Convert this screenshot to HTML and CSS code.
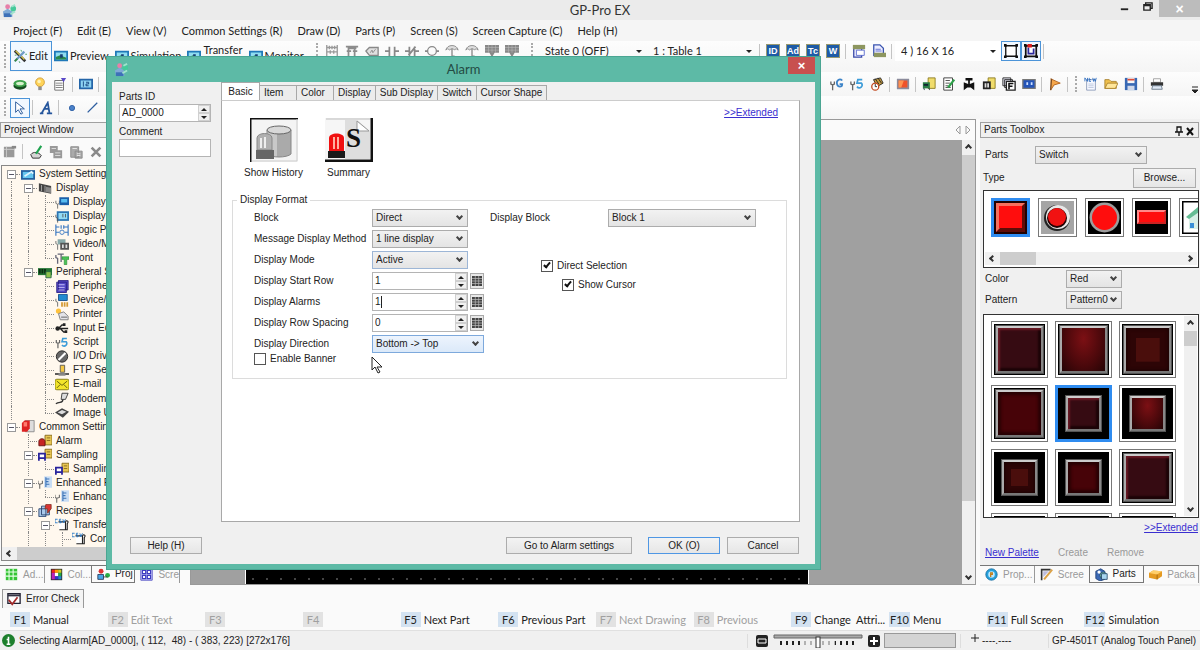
FILE: index.html
```html
<!doctype html>
<html lang="en">
  <head>
    <meta charset="UTF-8" />
    <meta name="viewport" content="width=device-width, initial-scale=1.0" />
    <title>GP-Pro EX</title>
    <link rel="stylesheet" href="styles.css">
  </head>
  <body>
    <!-- icon sprite -->
    <svg class="sprite" aria-hidden="true">
      <symbol id="app" viewBox="0 0 16 16"><circle cx="6" cy="4" r="2.6" fill="#e77fa8"/><path d="M1 9l5-3 5 3v6H2z" fill="#7fa9d6"/><path d="M2 11h8v4H2z" fill="#3d70b8"/><circle cx="12" cy="6" r="3" fill="#45c99a"/><path d="M10 4l4-2M9 12l5-3" stroke="#9fe3cc" stroke-width="2"/></symbol>
      <symbol id="pencil" viewBox="0 0 16 16"><path d="M2 2l12 12" stroke="#333" stroke-width="3"/><path d="M3 2l10 10" stroke="#d8c64a" stroke-width="1.5"/><path d="M2 14L13 3" stroke="#6f9cc8" stroke-width="2.5"/><path d="M2 14l3-3" stroke="#3a8a3a" stroke-width="2"/><path d="M9 1l1 2M14 6h2M2 7h2M7 14l1 2" stroke="#3d9c5a"/></symbol>
      <symbol id="preview" viewBox="0 0 16 16"><path d="M0 2h16v12H0z" fill="#1f78b8"/><path d="M2 4h12v8H2z" fill="#8fdcf0"/><path d="M2 9l5-2 7 3v2H2z" fill="#2c8a4c"/><path d="M7 6h3v4H7z" fill="#183d73"/></symbol>
      <symbol id="ring" viewBox="0 0 16 16"><ellipse cx="8" cy="10" rx="7.5" ry="4.5" fill="#164d20"/><ellipse cx="8" cy="7.500" rx="7.500" ry="4" fill="#3ea34c"/><ellipse cx="8" cy="7.5" rx="4.500" ry="2" fill="#d8f3cd"/></symbol>
      <symbol id="bulb" viewBox="0 0 16 16"><circle cx="8" cy="6" r="5" fill="#ffd45a" stroke="#cf9a32"/><circle cx="7" cy="5" r="2" fill="#fff3b8"/><path d="M6 11h4v4H6z" fill="#8f8f8f"/></symbol>
      <symbol id="sheet" viewBox="0 0 16 16"><path d="M2 4h10v11H2z" fill="#fff" stroke="#666"/><path d="M3 7h8M3 9.500h8M3 12h8" stroke="#777"/><path d="M9 1h6l-3 5z" fill="#5a49c8"/></symbol>
      <symbol id="screen" viewBox="0 0 16 16"><path d="M1 3h14v10H1z" fill="#8dd3f2" stroke="#2465a8" stroke-width="2"/><path d="M5 5v6M8 6h3v2H8v2h3" stroke="#123f7a" fill="none"/></symbol>
      <symbol id="pointer" viewBox="0 0 16 16"><path d="M3 1v12l3-3 3 5 2-1-3-5h5z" fill="#fff" stroke="#1d4f93"/></symbol>
      <symbol id="letter" viewBox="0 0 16 16"><path d="M1 14h4M9 14h6M3 14L10 2l2 12M6 9h5" fill="none" stroke="#24559c" stroke-width="2"/></symbol>
      <symbol id="dot" viewBox="0 0 16 16"><circle cx="8" cy="8" r="3" fill="#4b82c9" stroke="#2b5da3"/></symbol>
      <symbol id="line" viewBox="0 0 16 16"><path d="M3 13L14 2" stroke="#2f5fa0" stroke-width="1.500"/></symbol>
      <symbol id="lad1" viewBox="0 0 16 16"><path d="M2 1v13M14 1v13M2 4h12M2 9h12M5 2v4M8 2v4M11 2v4M6 7v4M10 7v4" stroke="#999" stroke-width="1.500" fill="none"/></symbol>
      <symbol id="lad2" viewBox="0 0 16 16"><path d="M1 3h14M4 3v12M11 3v12M2 8h5M9 8h5M4 5h9" stroke="#8c8c8c" stroke-width="2" fill="none"/></symbol>
      <symbol id="lad3" viewBox="0 0 16 16"><path d="M5 4h10v9H5L1 8z" fill="#e0e0e0" stroke="#888" stroke-width="1.500"/><path d="M6 10l2-3 1 3 3-4" stroke="#888" fill="none"/></symbol>
      <symbol id="cno" viewBox="0 0 16 16"><path d="M0 8h5M5 3v11M11 3v11M11 8h5" stroke="#888" stroke-width="2"/></symbol>
      <symbol id="cnc" viewBox="0 0 16 16"><path d="M0 8h5M5 3v11M11 3v11M11 8h5M4 13l8-10" stroke="#888" stroke-width="2"/></symbol>
      <symbol id="coil" viewBox="0 0 16 16"><circle cx="8" cy="8" r="5" fill="none" stroke="#888" stroke-width="1.500"/><path d="M0 8h3M13 8h3" stroke="#888" stroke-width="2"/></symbol>
      <symbol id="umb" viewBox="0 0 16 16"><path d="M1 7c1-7 13-7 14 0-2-2-3-2-4 0-1-2-4-2-6 0-1-2-3-2-4 0z" fill="#ddd" stroke="#888"/><path d="M8 5v9h3" stroke="#888" stroke-width="1.500" fill="none"/></symbol>
      <symbol id="keys" viewBox="0 0 16 16"><path d="M0 1h16v9H0zM5 10h6l-3 5z" fill="#888"/><path d="M0 4h16M0 7h16M4 1v9M8 1v9M12 1v9" stroke="#bbb" stroke-width=".6"/></symbol>
      <symbol id="copy1" viewBox="0 0 16 16"><path d="M2 3h9v12H2z" fill="#eef" stroke="#3949a8" stroke-width="1.500"/><path d="M1 1h14v5H1z" fill="#8d965f"/><path d="M5 7h9v6H5z" fill="#fff" stroke="#56c"/></symbol>
      <symbol id="copy2" viewBox="0 0 16 16"><path d="M2 1h7l4 4v8H2z" fill="#eef" stroke="#3b55b0" stroke-width="1.500"/><path d="M4 6h6M4 8h7" stroke="#56c"/><path d="M2 10h14v5H2z" fill="#8d965f"/></symbol>
      <symbol id="frame" viewBox="0 0 16 16"><path d="M2 2h12v12H2z" fill="#fff" stroke="#111" stroke-width="1.500"/><path d="M0 0h3v3H0zM13 0h3v3h-3zM0 13h3v3H0zM13 13h3v3h-3z" fill="#111"/></symbol>
      <symbol id="frame2" viewBox="0 0 16 16"><path d="M2 2h12v12H2z" fill="#fff" stroke="#111" stroke-width="2"/><path d="M5 4v7h6V5" fill="none" stroke="#2c2a9c" stroke-width="2"/><path d="M4 0h5v4H4z" fill="#e01b1b"/><path d="M0 0h3v3H0zM13 0h3v3h-3zM0 13h3v3H0zM13 13h3v3h-3z" fill="#111"/></symbol>
      <symbol id="wg" viewBox="0 0 16 16"><path d="M1 5v3l2 1v6M5 5v3L3 9" stroke="#666" stroke-width="1.500" fill="none"/><path d="M14 4c-3-3-7 0-6 4s6 4 6 0h-3" stroke="#3d84c8" stroke-width="2" fill="none"/></symbol>
      <symbol id="ws" viewBox="0 0 16 16"><path d="M1 5v3l2 1v6M5 5v3L3 9" stroke="#666" stroke-width="1.500" fill="none"/><path d="M14 3H9L8 7h5c3 3-2 8-5 4" stroke="#3d9cd8" stroke-width="2" fill="none"/></symbol>
      <symbol id="stop" viewBox="0 0 16 16"><path d="M4 3l8-2 3 6-7 4z" fill="#c69b3d" stroke="#222"/><path d="M6 2l4 6M9 1l4 6" stroke="#222"/><circle cx="6" cy="11" r="4" fill="#fff" stroke="#c2481e" stroke-width="1.500"/><path d="M6 8v3h2" stroke="#222" fill="none"/></symbol>
      <symbol id="orange" viewBox="0 0 16 16"><path d="M1 2h14v12H1z" fill="#8c8c9c"/><path d="M3 4h10v8H3z" fill="#f0522a"/><path d="M3 4h6l-3 8H3z" fill="#ff9350"/></symbol>
      <symbol id="gdoc" viewBox="0 0 16 16"><path d="M7 1h8v12H7z" fill="#f0dc6c" stroke="#8a7a1e"/><path d="M1 6h8v7H1z" fill="#2a7d46"/><path d="M2 8h5v2H2zM1 13h2v2M7 13h2v2" fill="#123"/></symbol>
      <symbol id="note" viewBox="0 0 16 16"><path d="M2 1h10v14H2z" fill="#fff" stroke="#333"/><path d="M4 4h5M4 7h5M4 10h3M4 12h6" stroke="#444"/><path d="M14 3L7 12" stroke="#2fa04a" stroke-width="2.500"/></symbol>
      <symbol id="valve" viewBox="0 0 16 16"><path d="M4 1h8v3H9v4l5-2v9l-4-3H6l-4 3V6l5 2V4H4z" fill="#111"/></symbol>
      <symbol id="bkdoc" viewBox="0 0 16 16"><path d="M7 1h8v12H7z" fill="#f0dc6c" stroke="#8a7a1e"/><path d="M1 5h9v9H1z" fill="#222"/><path d="M3 7h2v5H3zM6 7h2v5H6z" fill="#ddd"/></symbol>
      <symbol id="fbox" viewBox="0 0 16 16"><path d="M1 1h9v9H1zM3 3h9v9H3z" fill="#e8e8f4" stroke="#222"/><path d="M5 5h10v10H5z" fill="#fff" stroke="#222" stroke-width="1.500"/><path d="M8 14V7.500h5M8 10.500h4" stroke="#111" stroke-width="1.800" fill="none"/></symbol>
      <symbol id="face" viewBox="0 0 16 16"><path d="M1 3h14v10H1z" fill="#2454b8" stroke="#777" stroke-width="1.500"/><path d="M5 6h2v3H5zM10 6h2v3h-2z" fill="#cfe1ff"/></symbol>
      <symbol id="flag" viewBox="0 0 16 16"><path d="M3 2l11 5-7 2-4 6" fill="#f5a64a" stroke="#b0601b"/><path d="M4 2L3 15" stroke="#7a4a22" stroke-width="1.500"/></symbol>
      <symbol id="new" viewBox="0 0 16 16"><path d="M3 3h10v12H3z" fill="#f6f8ff" stroke="#8a99b8"/><path d="M1 5V1l3 4V1M6 1v4h2M6 3h2M10 1l1 4 1-3 1 3 1-4" stroke="#2f6fc0" fill="none"/><path d="M5 8h6M5 10h6M5 12h6" stroke="#bcc7de"/></symbol>
      <symbol id="open" viewBox="0 0 16 16"><path d="M1 13V3h5l2 2h6v8z" fill="#f0c04c" stroke="#a8802b"/><path d="M1 13l3-6h12l-3 6z" fill="#ffe69a" stroke="#a8802b"/></symbol>
      <symbol id="save" viewBox="0 0 16 16"><path d="M1 1h14v14H1z" fill="#3868b4"/><path d="M4 1h8v6H4z" fill="#f6f6f6"/><path d="M4 2h8v2H4z" fill="#dc4d3b"/><path d="M4 10h8v5H4z" fill="#cfd8ea"/></symbol>
      <symbol id="print" viewBox="0 0 16 16"><path d="M4 2h8v4H4z" fill="#fff" stroke="#999"/><path d="M1 6h14v4H1z" fill="#333"/><path d="M3 10h10l1 4H2z" fill="#dfe8f5" stroke="#678"/></symbol>
      <symbol id="prop" viewBox="0 0 16 16"><path d="M1 2h12v12H1z" fill="#999"/><path d="M1 5h12M4 2v12" stroke="#ccc"/><path d="M10 1h5v3h-5z" fill="#888"/></symbol>
      <symbol id="edit" viewBox="0 0 16 16"><path d="M2 11c3-4 9-3 12 1l-2 3H4z" fill="#d5d5d5" stroke="#222"/><path d="M14 1L8 10" stroke="#1fa350" stroke-width="2.500"/></symbol>
      <symbol id="cpy" viewBox="0 0 16 16"><path d="M1 1h9v8H1zM5 6h10v9H5z" fill="#999"/><path d="M3 4h5M7 9h6M7 12h6" stroke="#e4e4e4"/></symbol>
      <symbol id="pst" viewBox="0 0 16 16"><path d="M2 2h9v12H2zM7 7h8v8H7z" fill="#aaa" stroke="#888"/><path d="M9 10h4M9 12h4M4 4h5" stroke="#eee"/></symbol>
      <symbol id="del" viewBox="0 0 16 16"><path d="M3 3l10 10M13 3L3 13" stroke="#8a8a8a" stroke-width="3"/></symbol>
      <symbol id="t-sys" viewBox="0 0 16 14"><path d="M0 2h16v11H0z" fill="#235f9e"/><path d="M2 4h12v7H2z" fill="#64c5ee"/><path d="M4 9l8-5 2 2" stroke="#dff5ff" stroke-width="2" fill="none"/></symbol>
      <symbol id="t-disp" viewBox="0 0 16 14"><path d="M1 1l14 3v9L1 10z" fill="#444"/><path d="M4 3v7M8 4v7" stroke="#aaa"/><path d="M9 5l6 1v6l-6-1z" fill="#888"/></symbol>
      <symbol id="t-scr" viewBox="0 0 16 14"><path d="M1 5v3l2 1v5M5 5v3L3 9" stroke="#666" fill="none"/><path d="M5 1h11v9H5z" fill="#1c5fa8"/><path d="M7 3h7v4H7z" fill="#58bdf0"/></symbol>
      <symbol id="t-scr2" viewBox="0 0 16 14"><path d="M2 1h14v11H2z" fill="#2a75b4"/><path d="M4 3h10v7H4z" fill="#92daf5"/><path d="M1 5v3l2 1v5M9 4v4M12 4v4" stroke="#555" fill="none"/></symbol>
      <symbol id="t-logic" viewBox="0 0 16 14"><path d="M1 0v13M15 0v13M1 3h4M7 1v4M10 1v4M10 3h5M1 9h4M11 9h4" stroke="#3474c0" stroke-width="1.300"/><circle cx="8" cy="9" r="2.500" fill="none" stroke="#3474c0"/></symbol>
      <symbol id="t-video" viewBox="0 0 16 14"><path d="M1 3v3l2 1v6" stroke="#666" fill="none"/><path d="M3 1h9v6H3z" fill="#8aa"/><path d="M6 5h10v8H6z" fill="#555"/><path d="M8 7h2v4H8zM12 7h2v4h-2z" fill="#ddd"/></symbol>
      <symbol id="t-font" viewBox="0 0 16 14"><path d="M1 3v3l2 1v6M3 2h7M7 2v9" stroke="#667" stroke-width="1.500" fill="none"/><path d="M8 5h8v3h-2.500v6h-3V8H8z" fill="#4ac456" stroke="#287d33" stroke-width=".6"/></symbol>
      <symbol id="t-board" viewBox="0 0 16 14"><path d="M0 2h16v8H0z" fill="#227433"/><path d="M2 3v5M5 3v5M8 3v5" stroke="#0c2c12" stroke-width="2"/><path d="M9 6h6v7H9z" fill="#8cc14c" stroke="#264"/></symbol>
      <symbol id="t-list" viewBox="0 0 16 14"><path d="M4 0h11v11H4zM2 2h11v12H2z" fill="#5348c4" stroke="#281e80"/><path d="M4 5h7M4 8h7M4 11h7" stroke="#d2ccff"/></symbol>
      <symbol id="t-dev" viewBox="0 0 16 14"><path d="M1 5v3l2 1v5" stroke="#666" fill="none"/><path d="M4 0h10v7H4z" fill="#238bd0" stroke="#154d88"/><path d="M8 9v5M11 9v5M14 9v5" stroke="#d49a34" stroke-width="2"/></symbol>
      <symbol id="t-prn" viewBox="0 0 16 14"><circle cx="4" cy="3" r="3" fill="#ffc23b"/><path d="M4 6l6-2 5 5v4H6z" fill="#e4e4e8" stroke="#777"/><path d="M7 10h7" stroke="#555"/></symbol>
      <symbol id="t-usb" viewBox="0 0 16 14"><path d="M1 7h14M4 7l4-4h3M6 7l4 4h2" stroke="#222" stroke-width="1.500" fill="none"/><circle cx="3" cy="7" r="2.500" fill="#222"/><path d="M9 1h3v3H9zM11 9h3v3h-3z" fill="#222"/></symbol>
      <symbol id="t-io" viewBox="0 0 16 14"><circle cx="8" cy="7" r="6.500" fill="#666" stroke="#222"/><path d="M4 11L12 3" stroke="#fff" stroke-width="2.500"/></symbol>
      <symbol id="t-ftp" viewBox="0 0 16 14"><path d="M0 11h16" stroke="#444" stroke-width="2"/><path d="M6 1h5v8H6z" fill="#f4c845" stroke="#555"/><path d="M4 10h8v3H4z" fill="#888"/></symbol>
      <symbol id="t-mail" viewBox="0 0 16 14"><rect x="0" y="1" width="16" height="12" rx="2" fill="#f3e52a" stroke="#7c7410"/><path d="M2 3l6 5 6-5M2 11l4-4M14 11l-4-4" stroke="#5c560c" fill="none"/></symbol>
      <symbol id="t-modem" viewBox="0 0 16 14"><path d="M8 1h7l-3 7H7z" fill="#ddd" stroke="#333"/><path d="M9 8c0 5-4 2-8 5" stroke="#333" stroke-width="1.500" fill="none"/></symbol>
      <symbol id="t-img" viewBox="0 0 16 14"><path d="M0 7l8-5 8 4-7 7z" fill="#444"/><path d="M3 7l5-3 5 2-5 3z" fill="#ddd"/></symbol>
      <symbol id="t-com" viewBox="0 0 16 14"><path d="M5 0h10v13H5z" fill="#ddd" stroke="#888"/><path d="M1 3l3-3h6v9L7 13H1z" fill="#dd2222"/><path d="M3 2h4v5H3z" fill="#ff7b6e"/></symbol>
      <symbol id="t-alarm" viewBox="0 0 16 14"><path d="M8 1h8v11H8z" fill="#e8c654" stroke="#85681a"/><path d="M10 4h4M10 7h4" stroke="#85681a"/><path d="M1 13V8c0-4 7-4 7 0v5z" fill="#c62424" stroke="#611"/></symbol>
      <symbol id="t-samp" viewBox="0 0 16 14"><path d="M8 1h8v10H8z" fill="#e8c654" stroke="#85681a"/><path d="M10 4h4M10 7h4" stroke="#85681a"/><path d="M1 6h7v5H1zM1 11v3M8 11v3" fill="#fff" stroke="#28239c" stroke-width="2"/></symbol>
      <symbol id="t-enh" viewBox="0 0 16 14"><path d="M0 5v3l2 1v5M5 5v3L2 9" stroke="#666" stroke-width="1.200" fill="none"/><path d="M7 0h9v13H7z" fill="#c7dcf4"/><path d="M9 1v11M9 3h4M9 6h3M9 9h4" stroke="#3e75b8" stroke-width="1.300"/></symbol>
      <symbol id="t-rec" viewBox="0 0 16 14"><path d="M1 5h8v9H1zM4 2h9v10H4z" fill="#a9c8ea" stroke="#28406c"/><path d="M9 0h6v5l-4 5V5H8z" fill="#da3434" stroke="#832"/></symbol>
      <symbol id="t-csv" viewBox="0 0 16 14"><path d="M4 4h8v9H5M12 3c4-1 3 2 2 3v7h-3" fill="#fff" stroke="#222" stroke-width="1.300"/><path d="M3 1H0v4h3M7 1H5v2h2v2H5M9 1l1 4 2-4" stroke="#2477c8" fill="none"/></symbol>
      <symbol id="b-addr" viewBox="0 0 16 16"><path d="M1 1h14v14H1z" fill="#35c435"/><path d="M1 5h14M1 10h14M5 1v14M10 1v14" stroke="#eaffea" stroke-width="1.300"/></symbol>
      <symbol id="b-col" viewBox="0 0 16 16"><path d="M1 1h14v14H1z" fill="#2a2a2a"/><path d="M2 2h4v4H2z" fill="#e22"/><path d="M6 2h4v4H6z" fill="#f90"/><path d="M10 2h4v4h-4z" fill="#cc2"/><path d="M10 6h4v4h-4z" fill="#2a4"/><path d="M10 10h4v4h-4z" fill="#28c"/><path d="M6 10h4v4H6z" fill="#33c"/><path d="M2 6h4v8H2z" fill="#b2b"/><path d="M6 6h4v4H6z" fill="#fff"/></symbol>
      <symbol id="b-proj" viewBox="0 0 16 16"><circle cx="5" cy="4" r="3" fill="#d33"/><circle cx="13" cy="9" r="3" fill="#27ae45"/><path d="M1 8h7v6H1z" fill="#48a6e4" stroke="#235"/><path d="M8 11h5" stroke="#333"/></symbol>
      <symbol id="b-scr" viewBox="0 0 16 16"><path d="M1 1h14v14H1z" fill="#dcdcff" stroke="#3d3cc0"/><path d="M3 3h4v4H3zM9 3h4v4H9zM3 9h4v4H3zM9 9h4v4H9z" fill="#fff" stroke="#3d3cc0" stroke-width="1.500"/></symbol>
      <symbol id="err" viewBox="0 0 16 16"><path d="M1 2h14v11H1z" fill="#fff" stroke="#223" stroke-width="1.500"/><path d="M1 4h14" stroke="#334" stroke-width="2"/><path d="M2 9l4 5 6-8" fill="none" stroke="#a32b2b" stroke-width="2"/></symbol>
      <symbol id="r-prop" viewBox="0 0 16 16"><circle cx="8" cy="8" r="7" fill="#27a1dc" stroke="#166a9c"/><circle cx="8" cy="8" r="4" fill="#bfe8fb"/><path d="M7 11V6h2v2H7" stroke="#c47a12" stroke-width="1.500" fill="none"/></symbol>
      <symbol id="r-scr" viewBox="0 0 16 16"><path d="M2 15V2h11" fill="none" stroke="#333" stroke-width="2"/><path d="M4 4h7l-7 7z" fill="#bbd"/><path d="M15 2L5 14" stroke="#dca247" stroke-width="2.500"/></symbol>
      <symbol id="r-parts" viewBox="0 0 16 16"><path d="M1 4l6-3 5 3v10l-6 2-5-3z" fill="#3b69b5" stroke="#1c3c75"/><circle cx="10" cy="9" r="4" fill="#7fd0a0" stroke="#246"/><path d="M8 7h7v7H8z" fill="#a9d6ef" stroke="#246"/><circle cx="5" cy="5" r="2" fill="#fff"/></symbol>
      <symbol id="r-pack" viewBox="0 0 16 16"><path d="M0 6l5-3 11 1v6l-6 4-10-2z" fill="#e49a22"/><path d="M0 6l5-3 11 1-6 4z" fill="#ffcf6b"/><path d="M10 8v6" stroke="#98600e"/></symbol>
      <symbol id="pad" viewBox="0 0 12 12"><path d="M1 1h10v10H1z" fill="#444"/><path d="M1 3.500h10M1 6h10M1 8.500h10M4.300 1v10M7.700 1v10" stroke="#bbb" stroke-width=".7"/></symbol>
    </svg>

    <header class="titlebar">
      <svg class="app-icon"><use href="#app"/></svg>
      <h1>GP-Pro EX</h1>
      <div class="window-btns">
        <button aria-label="Minimize"><svg viewBox="0 0 12 12"><path d="M2 9h8" stroke="#222" stroke-width="2"/></svg></button>
        <button aria-label="Restore"><svg viewBox="0 0 12 12"><path d="M4 4V2h7v6H9M2 4h7v6H2zM2 5h7" fill="none" stroke="#222" stroke-width="1.500"/></svg></button>
        <button class="win-close" aria-label="Close">×</button>
      </div>
    </header>

    <nav class="menubar">
      <button>Project (F)</button>
      <button>Edit (E)</button>
      <button>View (V)</button>
      <button>Common Settings (R)</button>
      <button>Draw (D)</button>
      <button>Parts (P)</button>
      <button>Screen (S)</button>
      <button>Screen Capture (C)</button>
      <button>Help (H)</button>
    </nav>

    <div class="toolbar main-tools">
      <span class="grip"></span>
      <div class="modes">
        <button class="mode active"><svg><use href="#pencil"/></svg>Edit</button>
        <button class="mode"><svg><use href="#preview"/></svg>Preview</button>
        <button class="mode"><svg><use href="#preview"/></svg>Simulation</button>
        <button class="mode transfer"><svg><use href="#preview"/></svg><span>Transfer</span></button>
        <button class="mode"><svg><use href="#preview"/></svg>Monitor</button>
      </div>
      <div class="tools">
        <span class="grip"></span>
        <button class="tool" aria-label="Rung"><svg><use href="#lad1"/></svg></button>
        <button class="tool" aria-label="Branch"><svg><use href="#lad2"/></svg></button>
        <button class="tool" aria-label="Label"><svg><use href="#lad3"/></svg></button>
        <button class="tool" aria-label="NO contact"><svg><use href="#cno"/></svg></button>
        <button class="tool" aria-label="NC contact"><svg><use href="#cnc"/></svg></button>
        <button class="tool" aria-label="Coil"><svg><use href="#coil"/></svg></button>
        <button class="tool" aria-label="Set"><svg><use href="#umb"/></svg></button>
        <button class="tool" aria-label="Reset"><svg><use href="#umb"/></svg></button>
        <button class="tool" aria-label="Timer"><svg><use href="#keys"/></svg></button>
        <button class="tool" aria-label="Counter"><svg><use href="#keys"/></svg></button>
        <span class="grip wide"></span>
        <span class="flat-select state"><select aria-label="State"><option>State 0 (OFF)</option></select></span>
        <span class="flat-select table"><select aria-label="Table"><option>1 : Table 1</option></select></span>
        <span class="sep"></span>
        <button class="tool chip">ID</button>
        <button class="tool chip">Ad</button>
        <button class="tool chip">Tc</button>
        <button class="tool chip">W</button>
        <span class="sep"></span>
        <button class="tool" aria-label="Bring to front"><svg><use href="#copy1"/></svg></button>
        <button class="tool" aria-label="Send to back"><svg><use href="#copy2"/></svg></button>
        <span class="sep"></span>
        <span class="flat-select grid-size"><select aria-label="Grid size"><option>4 ) 16 X 16</option></select></span>
        <button class="tool active" aria-label="Snap"><svg><use href="#frame"/></svg></button>
        <button class="tool active" aria-label="Guide"><svg><use href="#frame2"/></svg></button>
        <span class="sep"></span>
      </div>
    </div>

    <div class="toolbar part-tools">
      <div class="tools">
        <span class="grip"></span>
        <button class="tool" aria-label="Switch"><svg><use href="#ring"/></svg></button>
        <button class="tool" aria-label="Lamp"><svg><use href="#bulb"/></svg></button>
        <button class="tool" aria-label="Message"><svg><use href="#sheet"/></svg></button>
        <span class="sep"></span>
        <button class="tool" aria-label="Data display"><svg><use href="#screen"/></svg></button>
        <span class="sep"></span>
      </div>
      <div class="tools">
        <button class="tool" aria-label="Global D-script"><svg><use href="#wg"/></svg></button>
        <button class="tool" aria-label="Script"><svg><use href="#ws"/></svg></button>
        <button class="tool" aria-label="Time schedule"><svg><use href="#stop"/></svg></button>
        <span class="sep"></span>
        <button class="tool" aria-label="Image"><svg><use href="#orange"/></svg></button>
        <span class="sep"></span>
        <button class="tool" aria-label="Recipe"><svg><use href="#gdoc"/></svg></button>
        <button class="tool" aria-label="Note"><svg><use href="#note"/></svg></button>
        <button class="tool" aria-label="Valve"><svg><use href="#valve"/></svg></button>
        <button class="tool" aria-label="Sampling"><svg><use href="#bkdoc"/></svg></button>
        <button class="tool" aria-label="Function"><svg><use href="#fbox"/></svg></button>
        <button class="tool" aria-label="Remote"><svg><use href="#face"/></svg></button>
        <span class="sep"></span>
        <button class="tool" aria-label="Mark"><svg><use href="#flag"/></svg></button>
        <span class="sep"></span>
        <span class="grip"></span>
        <button class="tool" aria-label="New"><svg><use href="#new"/></svg></button>
        <button class="tool" aria-label="Open"><svg><use href="#open"/></svg></button>
        <button class="tool" aria-label="Save"><svg><use href="#save"/></svg></button>
        <span class="sep"></span>
        <button class="tool" aria-label="Print"><svg><use href="#print"/></svg></button>
        <button class="more" aria-label="More buttons"><svg viewBox="0 0 8 8"><path d="M1 1h6M1 4h6L4 7z" fill="#222" stroke="#222"/></svg></button>
      </div>
    </div>

    <div class="toolbar draw-tools">
      <div class="tools">
        <span class="grip"></span>
        <button class="tool active" aria-label="Select"><svg><use href="#pointer"/></svg></button>
        <span class="sep"></span>
        <button class="tool" aria-label="Text"><svg><use href="#letter"/></svg></button>
        <span class="sep"></span>
        <button class="tool" aria-label="Dot"><svg><use href="#dot"/></svg></button>
        <button class="tool" aria-label="Line"><svg><use href="#line"/></svg></button>
      </div>
    </div>

    <main class="workspace">
      <aside class="panel project">
        <h2 class="panel-title">Project Window</h2>
        <div class="project-tools">
          <button class="tool" aria-label="Properties"><svg><use href="#prop"/></svg></button>
          <span class="sep"></span>
          <button class="tool" aria-label="Edit item"><svg><use href="#edit"/></svg></button>
          <button class="tool" aria-label="Copy"><svg><use href="#cpy"/></svg></button>
          <button class="tool" aria-label="Paste"><svg><use href="#pst"/></svg></button>
          <button class="tool" aria-label="Delete"><svg><use href="#del"/></svg></button>
        </div>
        <div class="tree-box">
          <ul class="tree">
            <li><i class="x"></i><svg><use href="#t-sys"/></svg>System Settings</li>
            <li><i class="v"></i><i class="x"></i><svg><use href="#t-disp"/></svg>Display</li>
            <li><i class="v"></i><i class="v"></i><i class="t"></i><svg><use href="#t-scr"/></svg>Display</li>
            <li><i class="v"></i><i class="v"></i><i class="t"></i><svg><use href="#t-scr2"/></svg>Display</li>
            <li><i class="v"></i><i class="v"></i><i class="t"></i><svg><use href="#t-logic"/></svg>Logic P</li>
            <li><i class="v"></i><i class="v"></i><i class="t"></i><svg><use href="#t-video"/></svg>Video/M</li>
            <li><i class="v"></i><i class="v"></i><i class="t end"></i><svg><use href="#t-font"/></svg>Font</li>
            <li><i class="v"></i><i class="x"></i><svg><use href="#t-board"/></svg>Peripheral S</li>
            <li><i class="v"></i><i></i><i class="t"></i><svg><use href="#t-list"/></svg>Periphe</li>
            <li><i class="v"></i><i></i><i class="t"></i><svg><use href="#t-dev"/></svg>Device/</li>
            <li><i class="v"></i><i></i><i class="t"></i><svg><use href="#t-prn"/></svg>Printer</li>
            <li><i class="v"></i><i></i><i class="t"></i><svg><use href="#t-usb"/></svg>Input Eq</li>
            <li><i class="v"></i><i></i><i class="t"></i><svg><use href="#ws"/></svg>Script</li>
            <li><i class="v"></i><i></i><i class="t"></i><svg><use href="#t-io"/></svg>I/O Driv</li>
            <li><i class="v"></i><i></i><i class="t"></i><svg><use href="#t-ftp"/></svg>FTP Ser</li>
            <li><i class="v"></i><i></i><i class="t"></i><svg><use href="#t-mail"/></svg>E-mail</li>
            <li><i class="v"></i><i></i><i class="t"></i><svg><use href="#t-modem"/></svg>Modem</li>
            <li><i class="v"></i><i></i><i class="t end"></i><svg><use href="#t-img"/></svg>Image U</li>
            <li><i class="x"></i><svg><use href="#t-com"/></svg>Common Setting</li>
            <li><i></i><i class="t"></i><svg><use href="#t-alarm"/></svg>Alarm</li>
            <li><i></i><i class="x"></i><svg><use href="#t-samp"/></svg>Sampling</li>
            <li><i></i><i class="v"></i><i class="t end"></i><svg><use href="#t-samp"/></svg>Sampling</li>
            <li><i></i><i class="x"></i><svg><use href="#t-enh"/></svg>Enhanced R</li>
            <li><i></i><i class="v"></i><i class="t end"></i><svg><use href="#t-enh"/></svg>Enhanc</li>
            <li><i></i><i class="x"></i><svg><use href="#t-rec"/></svg>Recipes</li>
            <li><i></i><i class="v"></i><i class="x"></i><svg><use href="#t-csv"/></svg>Transfe</li>
            <li><i></i><i class="v"></i><i class="v"></i><i class="t"></i><svg><use href="#t-csv"/></svg>Con</li>
          </ul>
          <div class="hscroll"><span class="arrow left"></span><span class="thumb"></span></div>
        </div>
        <div class="dock-tabs">
          <button><svg><use href="#b-addr"/></svg>Ad...</button>
          <button><svg><use href="#b-col"/></svg>Col...</button>
          <button class="active"><svg><use href="#b-proj"/></svg>Proj</button>
          <button><svg><use href="#b-scr"/></svg>Scre</button>
        </div>
      </aside>

      <section class="editor">
        <div class="editor-nav">
          <svg viewBox="0 0 18 10"><path d="M6 1L2 5l4 4zM12 1l4 4-4 4z" fill="none" stroke="#999"/></svg>
        </div>
        <div class="editor-body">
          <div class="canvas"><div class="screen"></div></div>
          <div class="vscroll"><span class="arrow up"></span><span class="thumb"></span><span class="arrow down"></span></div>
        </div>
      </section>

      <aside class="panel toolbox">
        <h2 class="panel-title">Parts Toolbox
          <svg viewBox="0 0 22 10"><path d="M4 1h4v5H4zM2 6h8M6 6v4" fill="none" stroke="#111" stroke-width="1.300"/><path d="M14 2l6 7M20 2l-6 7" stroke="#111" stroke-width="2"/></svg>
        </h2>
        <div class="tb-row parts-row">
          <label for="parts">Parts</label>
          <span class="select"><select id="parts"><option>Switch</option></select></span>
        </div>
        <div class="tb-row type-row"><span>Type</span><button class="btn browse">Browse...</button></div>
        <div class="type-list">
          <div class="types">
            <button class="type selected" aria-label="Square switch"><svg viewBox="0 0 33 33"><path d="M0 0h33v33H0z" fill="#200"/><path d="M2 2h29v29H2z" fill="#5e0c08"/><path d="M2 2h29l-4 4H6v21l-4 4z" fill="#f6705e"/><path d="M5 5h23v22H5z" fill="#ff0d0d"/></svg></button>
            <button class="type" aria-label="Round switch"><svg viewBox="0 0 33 33"><path d="M0 0h33v33H0z" fill="#a5a5a5"/><circle cx="16" cy="17" r="13" fill="#222"/><circle cx="17" cy="16" r="12" fill="#e8e8e8"/><circle cx="16" cy="17" r="10" fill="#200"/><circle cx="16" cy="16" r="9" fill="#f11212"/></svg></button>
            <button class="type" aria-label="Circle switch"><svg viewBox="0 0 33 33"><path d="M0 0h33v33H0z"/><circle cx="16.500" cy="16.500" r="15" fill="#9d9d9d"/><circle cx="16.500" cy="16.500" r="12.500" fill="#ff0d0d"/></svg></button>
            <button class="type" aria-label="Wide switch"><svg viewBox="0 0 33 33"><path d="M0 0h33v33H0z"/><path d="M2 9h29v14H2z" fill="#c22"/><path d="M2 9h29l-2 2H4v10l-2 2z" fill="#f88"/><path d="M4 11h25v10H4z" fill="#ff0d0d"/></svg></button>
            <button class="type" aria-label="Picture switch"><svg viewBox="0 0 33 33"><path d="M0 0h33v33H0z" fill="#fff" stroke="#000" stroke-width="3"/><path d="M4 16L16 6l6 4v4L10 20z" fill="#65bd94"/><path d="M7 18l10-7 4 5v12H7z" fill="#d8efe6"/><path d="M8 22h4v5H8z" fill="#3a8fd6"/></svg></button>
          </div>
          <div class="hscroll"><span class="arrow left"></span><span class="thumb"></span><span class="arrow right"></span></div>
        </div>
        <div class="tb-row color-row">
          <label for="color">Color</label>
          <span class="select"><select id="color"><option>Red</option></select></span>
        </div>
        <div class="tb-row pattern-row">
          <label for="pattern">Pattern</label>
          <span class="select"><select id="pattern"><option>Pattern0</option></select></span>
        </div>
        <div class="swatch-box">
          <div class="swatches">
            <button class="swatch" aria-label="Pattern 1"><span class="flat"></span></button>
            <button class="swatch" aria-label="Pattern 2"><span class="glow"></span></button>
            <button class="swatch" aria-label="Pattern 3"><span class="bevel"></span></button>
            <button class="swatch" aria-label="Pattern 4"><span class="deep"></span></button>
            <button class="swatch small selected" aria-label="Pattern 5"><span class="flat"></span></button>
            <button class="swatch small" aria-label="Pattern 6"><span class="glow"></span></button>
            <button class="swatch small" aria-label="Pattern 7"><span class="bevel"></span></button>
            <button class="swatch small" aria-label="Pattern 8"><span class="deep"></span></button>
            <button class="swatch" aria-label="Pattern 9"><span class="flat"></span></button>
            <button class="swatch small" aria-label="Pattern 10"></button>
            <button class="swatch small" aria-label="Pattern 11"></button>
            <button class="swatch small" aria-label="Pattern 12"></button>
          </div>
          <div class="vscroll"><span class="arrow up"></span><span class="thumb"></span><span class="arrow down"></span></div>
        </div>
        <a class="link tb-extended" href="#">&gt;&gt;Extended</a>
        <div class="palette-links">
          <a class="link" href="#">New Palette</a>
          <span>Create</span>
          <span>Remove</span>
        </div>
        <div class="dock-tabs">
          <button><svg><use href="#r-prop"/></svg>Prop...</button>
          <button><svg><use href="#r-scr"/></svg>Scree</button>
          <button class="active"><svg><use href="#r-parts"/></svg>Parts</button>
          <button><svg><use href="#r-pack"/></svg>Packa</button>
        </div>
      </aside>
    </main>

    <div class="error-bar">
      <button><svg><use href="#err"/></svg>Error Check</button>
    </div>

    <div class="fkeys">
      <button><kbd>F1</kbd>Manual</button>
      <button disabled><kbd>F2</kbd>Edit Text</button>
      <button disabled><kbd>F3</kbd></button>
      <button disabled><kbd>F4</kbd></button>
      <button><kbd>F5</kbd>Next Part</button>
      <button><kbd>F6</kbd>Previous Part</button>
      <button disabled><kbd>F7</kbd>Next Drawing</button>
      <button disabled><kbd>F8</kbd>Previous</button>
      <button><kbd>F9</kbd>Change&nbsp; Attri...</button>
      <button><kbd>F10</kbd>Menu</button>
      <button><kbd>F11</kbd>Full Screen</button>
      <button><kbd>F12</kbd>Simulation</button>
    </div>

    <footer class="statusbar">
      <svg class="info" viewBox="0 0 14 14"><circle cx="7" cy="7" r="7" fill="#1d7f2c"/><path d="M7 3v2M5 6h2v5M5 11h4" stroke="#fff" stroke-width="1.700" fill="none"/></svg>
      <span class="status-text">Selecting Alarm[AD_0000], ( 112,&nbsp; 48) - ( 383, 223) [272x176]</span>
      <div class="zoom">
        <button aria-label="Zoom out"><svg viewBox="0 0 12 12"><rect width="12" height="12" rx="2" fill="#222"/><path d="M2 4h8v4H2z" fill="none" stroke="#fff"/></svg></button>
        <svg class="track" viewBox="0 0 90 14"><path d="M1 1h88v3H1z" fill="#aaa" stroke="#666"/><path d="M7 9h78" stroke="#222" stroke-width="4" stroke-dasharray="2 4"/><path d="M28 9h34" stroke="#f0f0f0" stroke-width="5" opacity=".7"/><rect x="43" y="3" width="4" height="11" fill="#fff" stroke="#333"/></svg>
        <button aria-label="Zoom in"><svg viewBox="0 0 12 12"><rect width="12" height="12" rx="2" fill="#222"/><path d="M6 2v8M2 6h8" stroke="#fff" stroke-width="2"/></svg></button>
      </div>
      <span class="progress"></span>
      <span class="coords"><svg viewBox="0 0 8 8"><path d="M4 0v8M0 4h8" stroke="#222"/></svg>----.----</span>
      <span class="model">GP-4501T (Analog Touch Panel)</span>
    </footer>

    <!-- Alarm settings window -->
    <div class="dialog" role="dialog" aria-labelledby="dialog-title">
      <div class="dialog-title">
        <svg class="app-icon"><use href="#app"/></svg>
        <h2 id="dialog-title">Alarm</h2>
        <button class="dialog-close" aria-label="Close Alarm">×</button>
      </div>
      <div class="dialog-body">
        <div class="dialog-main">
          <div class="ids">
            <label for="parts-id">Parts ID</label>
            <div class="spin">
              <input type="text" id="parts-id" value="AD_0000" />
              <span class="spin-btns"><button aria-label="Next ID"></button><button aria-label="Previous ID"></button></span>
            </div>
            <label for="comment">Comment</label>
            <input type="text" id="comment" class="comment" />
          </div>

          <div class="pages">
            <div class="tabs" role="tablist">
              <button class="active" role="tab">Basic</button>
              <button role="tab">Item</button>
              <button role="tab">Color</button>
              <button role="tab">Display</button>
              <button role="tab">Sub Display</button>
              <button role="tab">Switch</button>
              <button role="tab">Cursor Shape</button>
            </div>
            <div class="page">
              <a class="link extended" href="#">&gt;&gt;Extended</a>
              <div class="kinds">
                <button class="kind">
                  <svg viewBox="0 0 48 44"><path d="M0 0h48v44H0z" fill="#f4f4f4"/><path d="M0 44V0h48" fill="none" stroke="#111" stroke-width="3"/><path d="M47 1v42H2" fill="none" stroke="#ccc"/><path d="M17 12v24c4 4 20 4 24 0V12z" fill="#aaa"/><path d="M17 12v24c3 3 6 3 10 3V14z" fill="#c8c8c8"/><ellipse cx="29" cy="12" rx="12" ry="4" fill="#d8d8d8" stroke="#666"/><path d="M17 12v24c4 4 20 4 24 0V12" fill="none" stroke="#888"/><path d="M7 32V20c0-6 15-6 15 0v12z" fill="#b0b0b0" stroke="#888"/><path d="M11 20v10M15 19v11" stroke="#eee" stroke-width="2"/><path d="M6 32h18v9H6z" fill="#666"/></svg>
                  Show History
                </button>
                <button class="kind">
                  <svg viewBox="0 0 48 44"><path d="M0 0h48v44H0z" fill="#f6f6f6"/><path d="M20 2h12l13 11v28H20z" fill="#dedede"/><path d="M32 3v10h12z" fill="#fff" stroke="#999"/><path d="M1 1h46" stroke="#bbb"/><path d="M47 0v43H0" fill="none" stroke="#111" stroke-width="3"/><path d="M4 33V20c0-6 15-6 15 0v13z" fill="#f01010"/><path d="M9 19v12M13 19v12" stroke="#ffb0a0" stroke-width="2"/><path d="M3 33h17v7H3z" fill="#1a1a1a"/><text x="21" y="29" class="s-letter">S</text></svg>
                  Summary
                </button>
              </div>

              <fieldset class="format">
                <legend>Display Format</legend>
                <div class="fields">
                  <label for="block">Block</label>
                  <span class="select"><select id="block"><option>Direct</option></select></span>
                  <label for="method">Message Display Method</label>
                  <span class="select"><select id="method"><option>1 line display</option></select></span>
                  <label for="mode">Display Mode</label>
                  <span class="select hot"><select id="mode"><option>Active</option></select></span>
                  <label for="start-row">Display Start Row</label>
                  <div class="num">
                    <div class="spin"><input type="text" id="start-row" value="1" /><span class="spin-btns"><button aria-label="Start row up"></button><button aria-label="Start row down"></button></span></div>
                    <button class="pad-btn" aria-label="Start row keypad"><svg><use href="#pad"/></svg></button>
                  </div>
                  <label for="alarms">Display Alarms</label>
                  <div class="num">
                    <div class="spin"><input type="text" id="alarms" class="editing" value="1" /><span class="spin-btns"><button aria-label="Alarms up"></button><button aria-label="Alarms down"></button></span></div>
                    <button class="pad-btn" aria-label="Alarms keypad"><svg><use href="#pad"/></svg></button>
                  </div>
                  <label for="spacing">Display Row Spacing</label>
                  <div class="num">
                    <div class="spin"><input type="text" id="spacing" value="0" /><span class="spin-btns"><button aria-label="Spacing up"></button><button aria-label="Spacing down"></button></span></div>
                    <button class="pad-btn" aria-label="Spacing keypad"><svg><use href="#pad"/></svg></button>
                  </div>
                  <label for="direction">Display Direction</label>
                  <span class="select wide focus"><select id="direction"><option>Bottom -&gt; Top</option></select></span>
                  <label class="check banner"><input type="checkbox" />Enable Banner</label>
                </div>
                <div class="options">
                  <div class="block-row">
                    <label for="display-block">Display Block</label>
                    <span class="select"><select id="display-block"><option>Block 1</option></select></span>
                  </div>
                  <label class="check direct"><input type="checkbox" checked />Direct Selection</label>
                  <label class="check cursor"><input type="checkbox" checked />Show Cursor</label>
                </div>
              </fieldset>
            </div>
          </div>
        </div>

        <div class="dialog-footer">
          <button class="btn help">Help (H)</button>
          <button class="btn goto">Go to Alarm settings</button>
          <button class="btn default">OK (O)</button>
          <button class="btn">Cancel</button>
        </div>
      </div>
    </div>

    <svg class="mouse" viewBox="0 0 12 18" aria-hidden="true"><path d="M1 1v13l3-3 3 6 2-1-3-5h5z" fill="#fff" stroke="#222"/></svg>
  </body>
</html>
```
FILE: styles.css
```css
:root {
  --ui: "Liberation Sans", Arial, sans-serif;
  --menu: Lato, "Open Sans", sans-serif;
  --teal: #5dbaa6;
  --face: #f0f0f0;
  --line: #a8a8a8;
}
* {
  box-sizing: border-box;
}
body {
  display: flex;
  flex-direction: column;
  height: 100vh;
  margin: 0;
  font: 10px/14px var(--ui);
  color: #222;
  background: #fafafa;
  overflow: hidden;
}
button,
input,
select {
  margin: 0;
  padding: 0;
  font: inherit;
  color: inherit;
  border: 0;
  border-radius: 0;
  background: none;
}
h1,
h2 {
  margin: 0;
  font-weight: normal;
}
.sprite {
  display: none;
}
.link {
  color: #3a2fd0;
}

/* title and menu */
.titlebar {
  display: flex;
  flex: none;
  align-items: center;
  height: 20px;
  background: #ebebeb;
}
.app-icon {
  width: 15px;
  height: 15px;
  margin-left: 2px;
}
.titlebar h1 {
  flex: 1;
  padding-left: 70px;
  font: 13px/20px var(--menu);
  color: #333;
  text-align: center;
}
.window-btns {
  display: flex;
  align-self: flex-start;
}
.window-btns button {
  width: 23px;
  height: 17px;
}
.window-btns svg {
  width: 11px;
  height: 11px;
}
.window-btns .win-close {
  width: 41px;
  font: bold 14px/16px var(--ui);
  color: #fff;
  background: #bcbcbc;
}
.menubar {
  display: flex;
  flex: none;
  gap: 15px;
  height: 21px;
  padding-left: 13px;
  background: #f5f5f5;
}
.menubar button {
  font: 11px/21px var(--menu);
}

/* toolbars */
.toolbar {
  display: flex;
  flex: none;
  justify-content: space-between;
  background: linear-gradient(#fdfdfd, #f5f5f5);
}
.tools {
  display: flex;
  align-items: center;
}
.grip {
  flex: none;
  width: 2px;
  height: 16px;
  margin: 0 4px;
  border-left: 2px dotted #aaa;
}
.grip.wide {
  margin: 0 6px 0 9px;
}
.sep {
  flex: none;
  width: 1px;
  height: 15px;
  margin: 0 3px 0 2px;
  background: #c4c4c4;
}
.tool {
  display: flex;
  flex: none;
  align-items: center;
  justify-content: center;
  width: 20px;
  height: 20px;
}
.tool svg {
  width: 14px;
  height: 14px;
}
.tool.active,
.mode.active {
  border: 1px solid #4c94d8;
  background: #f1f8ff;
}
.main-tools {
  justify-content: flex-start;
  height: 31px;
}
.main-tools > .grip {
  height: 24px;
  margin-top: 3px;
}
.main-tools > .tools {
  height: 20px;
}
.modes {
  display: flex;
  width: 302px;
}
.mode {
  display: flex;
  flex: none;
  align-items: center;
  gap: 2px;
  height: 30px;
  margin-right: 6px;
  font: 11px/14px var(--menu);
}
.mode.active {
  margin-right: 2px;
  padding: 0 3px 0 2px;
}
.mode svg {
  width: 14px;
  height: 14px;
}
.transfer span {
  align-self: flex-start;
  padding-top: 2px;
}
.flat-select {
  position: relative;
  font: 11px/20px var(--menu);
}
.flat-select select {
  width: 100%;
  height: 20px;
  padding-left: 6px;
  appearance: none;
}
.flat-select::after {
  content: "";
  position: absolute;
  right: 5px;
  top: 9px;
  border: 3px solid transparent;
  border-top-color: #222;
}
.state {
  width: 108px;
}
.table {
  width: 110px;
}
.grid-size {
  width: 106px;
  background: #fff;
}
.chip {
  width: 14px;
  height: 14px;
  margin: 0 3px;
  font: bold 9px/12px var(--ui);
  color: #fff;
  border: 1px solid #9a9a70;
  background: #1e5ba6;
}
.part-tools {
  height: 24px;
}
.more {
  align-self: flex-end;
  width: 10px;
  height: 12px;
  margin-left: 23px;
}
.more svg {
  width: 8px;
  height: 8px;
}
.draw-tools {
  height: 23px;
}

/* shared controls */
.select {
  position: relative;
  display: block;
  height: 18px;
  border: 1px solid #acacac;
  background: linear-gradient(#f2f2f2, #e4e4e4);
}
.select select {
  display: block;
  width: 100%;
  height: 16px;
  padding-left: 3px;
  appearance: none;
}
.select::after {
  content: "";
  position: absolute;
  right: 5px;
  top: 4px;
  width: 3px;
  height: 3px;
  border: solid #444;
  border-width: 0 2px 2px 0;
  transform: rotate(45deg);
  pointer-events: none;
}
.select.hot {
  border-color: #9db6d6;
}
.select.focus {
  border-color: #7da9dc;
  background: linear-gradient(#edf4fd, #dbe9f9);
}
.btn {
  width: 72px;
  height: 17px;
  border: 1px solid #acacac;
  background: linear-gradient(#f3f3f3, #e6e6e6);
}
.btn.default {
  border-color: #4f97e4;
}
.spin {
  display: flex;
  height: 18px;
  border: 1px solid #b4b4b4;
  background: #fff;
}
.spin input {
  flex: 1;
  min-width: 0;
  padding-left: 2px;
}
.spin .editing {
  background: linear-gradient(#222, #222) 8px center / 1px 12px no-repeat;
}
.spin-btns {
  display: flex;
  flex-direction: column;
  width: 12px;
}
.spin-btns button {
  display: flex;
  flex: 1;
  align-items: center;
  justify-content: center;
  border: 1px solid #d0d0d0;
  background: var(--face);
}
.spin-btns button::before {
  content: "";
  border: solid transparent;
  border-width: 0 3px 3px;
  border-bottom-color: #222;
}
.spin-btns button + button::before {
  border-width: 3px 3px 0;
  border-top-color: #222;
}
.check {
  display: flex;
  align-items: center;
  gap: 4px;
}
.check input {
  display: grid;
  width: 12px;
  height: 12px;
  border: 1px solid #555;
  background: #fff;
  appearance: none;
}
.check input:checked::before {
  content: "";
  width: 2px;
  height: 5px;
  margin: 0 3px;
  border: solid #111;
  border-width: 0 2px 2px 0;
  transform: rotate(40deg);
}
.hscroll,
.vscroll {
  display: flex;
  align-items: center;
  background: var(--face);
}
.hscroll {
  flex: none;
  height: 13px;
}
.vscroll {
  flex: none;
  flex-direction: column;
  width: 13px;
}
.thumb {
  background: #cdcdcd;
}
.hscroll .thumb {
  height: 100%;
}
.vscroll .thumb {
  width: 100%;
}
.arrow {
  flex: none;
  width: 5px;
  height: 5px;
  margin: 5px;
  border: solid #333;
  border-width: 2px 0 0 2px;
}
.arrow.up {
  transform: rotate(45deg);
}
.arrow.down {
  margin-top: auto;
  transform: rotate(225deg);
}
.arrow.left {
  transform: rotate(-45deg);
}
.arrow.right {
  margin-left: auto;
  transform: rotate(135deg);
}

/* workspace */
.workspace {
  display: flex;
  flex: 1;
  min-height: 0;
}
.panel {
  display: flex;
  flex: none;
  flex-direction: column;
  padding-top: 3px;
}
.panel-title {
  display: flex;
  flex: none;
  justify-content: space-between;
  height: 16px;
  padding: 0 3px;
  font-size: 10px;
  line-height: 14px;
  border: 1px solid #a0a0a0;
  background: var(--face);
}
.panel-title svg {
  width: 22px;
  height: 10px;
  margin-top: 3px;
}
.project {
  width: 190px;
}
.project-tools {
  display: flex;
  flex: none;
  align-items: center;
  height: 27px;
}
.tree-box {
  display: flex;
  flex: 1;
  flex-direction: column;
  min-height: 0;
  margin: 0 8px 0 1px;
  border: 1px solid #888;
  background: #fff8ee;
}
.tree {
  display: flex;
  flex: 1;
  flex-direction: column;
  min-height: 0;
  margin: 0;
  padding: 1px 0 1px 1px;
  list-style: none;
}
.tree li {
  display: flex;
  flex: 1;
  align-items: center;
  min-height: 0;
  white-space: nowrap;
}
.tree svg {
  flex: none;
  width: 14px;
  height: 13px;
  margin: 0 4px 0 1px;
}
.tree i {
  position: relative;
  align-self: stretch;
  flex: none;
  width: 17px;
}
.tree .v::before,
.tree .t::before {
  content: "";
  position: absolute;
  left: 8px;
  top: 0;
  bottom: 0;
  border-left: 1px dotted #888;
}
.tree .end::before {
  bottom: 50%;
}
.tree .t::after {
  content: "";
  position: absolute;
  left: 8px;
  right: 0;
  top: 50%;
  border-top: 1px dotted #888;
}
.tree .x::before {
  content: "";
  position: absolute;
  left: 4px;
  top: 3px;
  width: 7px;
  height: 7px;
  border: 1px solid #999;
  background: linear-gradient(#556, #556) center / 5px 1px no-repeat #fff;
}
.tree .x::after {
  content: "";
  position: absolute;
  left: 13px;
  right: 0;
  top: 50%;
  border-top: 1px dotted #888;
}
.tree-box .thumb {
  flex: 1;
}
.dock-tabs {
  display: flex;
  flex: none;
  height: 19px;
  margin: 4px 0 2px;
  border-top: 1px solid #777;
  background: #fafafa;
}
.project .dock-tabs {
  margin-right: 10px;
}
.dock-tabs button {
  display: flex;
  flex: 1;
  align-items: center;
  gap: 5px;
  height: 17px;
  padding-left: 5px;
  color: #999;
  border-right: 1px solid #999;
}
.dock-tabs button:nth-child(2) {
  border-right: 0;
}
.dock-tabs .active {
  color: #222;
  border: 1px solid #777;
  border-top: 0;
}
.dock-tabs svg {
  flex: none;
  width: 13px;
  height: 13px;
}
.editor {
  display: flex;
  flex: 1;
  flex-direction: column;
  min-width: 0;
  margin-bottom: 1px;
  border: 1px solid #999;
}
.editor-nav {
  display: flex;
  flex: none;
  justify-content: flex-end;
  align-items: center;
  height: 20px;
  background: #fafafa;
}
.editor-nav svg {
  width: 18px;
  height: 10px;
  margin-right: 3px;
}
.editor-body {
  display: flex;
  flex: 1;
  min-height: 0;
}
.canvas {
  flex: 1;
  padding: 40px 153px 0 54px;
  background: #a0a0a0;
}
.screen {
  height: 100%;
  border: 1px solid #fff;
  border-width: 0 1px;
  background: radial-gradient(#444 1px, #000 1px) 0 0 / 14px 14px;
}
.editor .thumb {
  flex: none;
  height: 78%;
}
.toolbox {
  width: 220px;
  margin-left: 4px;
  padding-right: 1px;
  background: var(--face);
}
.tb-row {
  display: flex;
  flex: none;
  align-items: center;
  height: 18px;
  padding-left: 5px;
}
.parts-row {
  margin-top: 8px;
}
.parts-row label {
  width: 50px;
}
.parts-row .select {
  width: 112px;
}
.type-row {
  justify-content: space-between;
  height: 20px;
  margin-top: 4px;
  padding: 0 3px;
}
.browse {
  width: 63px;
  height: 20px;
}
.type-list {
  flex: none;
  height: 78px;
  margin: 2px 0 2px 3px;
  padding: 0 1px;
  border: 1px solid #333;
  background: #fff;
  overflow: hidden;
}
.types {
  display: flex;
  gap: 8px;
  height: 61px;
  padding: 7px 0 0 6px;
}
.type {
  flex: none;
  width: 39px;
  height: 39px;
  padding: 2px;
  border: 1px solid #777;
}
.type svg {
  display: block;
  width: 33px;
  height: 33px;
}
.type.selected {
  border-color: #2f8cf0;
  background: #2f8cf0;
}
.type-list .thumb {
  width: 36px;
}
.color-row label,
.pattern-row label {
  width: 81px;
}
.color-row .select,
.pattern-row .select {
  width: 56px;
}
.pattern-row {
  margin-top: 3px;
}
.swatch-box {
  display: flex;
  flex: 1;
  justify-content: space-between;
  min-height: 0;
  margin: 5px 0 3px 3px;
  padding: 1px;
  border: 1px solid #333;
  background: #fff;
  overflow: hidden;
}
.swatches {
  display: grid;
  grid-template-columns: repeat(3, 57px);
  grid-auto-rows: 57px;
  gap: 7px;
  padding: 5px 0 0 6px;
}
.swatch {
  padding: 2px;
  border: 1px solid #777;
  background: #000 content-box;
}
.swatch.selected {
  border: 3px solid #2f8cf0;
  padding: 0;
}
.swatch span {
  display: block;
  width: 47px;
  height: 47px;
  margin: 2px;
  border: 2px solid;
  border-color: #ccc #888 #777 #aaa;
  outline: 1px solid #555;
}
.swatch.small span {
  width: 35px;
  height: 35px;
  margin: 8px;
}
.flat {
  background: #360b12;
  box-shadow: inset 2px 2px 2px #6a1a25, inset -3px -3px 2px #1c0407;
}
.glow {
  background: radial-gradient(at 50% 25%, #7c1014, #4a080b 60%, #240405);
}
.bevel {
  background: linear-gradient(#4a0e0c, #4a0e0c) center / 55% 55% no-repeat #2d0506;
  box-shadow: inset 0 0 4px #100;
}
.deep {
  background: #470308;
  box-shadow: inset 3px 3px 3px #290204, inset -3px -3px 3px #280104;
}
.swatch-box .thumb {
  height: 15px;
}
.tb-extended {
  align-self: flex-end;
  margin-right: 1px;
}
.palette-links {
  display: flex;
  flex: none;
  gap: 19px;
  margin: 11px 0 1px 5px;
  color: #999;
}

/* bottom bars */
.error-bar {
  flex: none;
  height: 23px;
  padding: 3px 2px 1px;
}
.error-bar button {
  display: flex;
  align-items: center;
  gap: 5px;
  height: 19px;
  padding: 0 4px;
  border: 1px solid #999;
  border-width: 1px 1px 0;
  background: #f4f4f4;
}
.error-bar svg {
  width: 14px;
  height: 14px;
}
.fkeys {
  display: grid;
  flex: none;
  grid-template-columns: repeat(12, 1fr);
  align-items: center;
  height: 22px;
  padding: 0 18px 0 10px;
  font: 11px/15px var(--menu);
  border-bottom: 1px solid #e0e0e0;
}
.fkeys button {
  display: flex;
  gap: 3px;
  white-space: nowrap;
}
.fkeys kbd {
  min-width: 20px;
  padding: 0 1px;
  font: inherit;
  background: #d3e2f1;
}
.fkeys button:disabled {
  color: #a0a0a0;
}
.fkeys button:disabled kbd {
  background: #e2e2e2;
}
.statusbar {
  display: flex;
  flex: none;
  align-items: center;
  height: 19px;
  background: var(--face);
}
.info {
  width: 13px;
  height: 13px;
  margin: 0 4px 0 2px;
}
.status-text {
  flex: 1;
  border-right: 1px solid #ddd;
}
.zoom {
  display: flex;
  align-items: center;
  gap: 5px;
  margin-left: 8px;
}
.zoom svg {
  display: block;
  width: 12px;
  height: 12px;
}
.zoom .track {
  width: 90px;
  height: 14px;
}
.progress {
  width: 72px;
  height: 15px;
  margin: 0 4px;
  border: 1px solid #999;
  background: #d4d4d4;
}
.coords {
  display: flex;
  gap: 3px;
  width: 88px;
  padding-left: 10px;
  border-left: 1px solid #ddd;
}
.coords svg {
  width: 8px;
  height: 8px;
}
.model {
  width: 152px;
  padding-left: 3px;
  border-left: 1px solid #ddd;
}

/* alarm dialog */
.dialog {
  position: absolute;
  left: 106px;
  top: 56px;
  width: 715px;
  height: 514px;
  display: flex;
  flex-direction: column;
  padding: 0 5px 5px;
  border: 1px solid #4aa592;
  background: var(--teal);
}
.dialog-title {
  display: flex;
  align-items: center;
  height: 25px;
}
.dialog-title h2 {
  flex: 1;
  padding-left: 10px;
  font: 13px/25px var(--menu);
  color: #244b43;
  text-align: center;
}
.dialog-close {
  align-self: flex-start;
  width: 27px;
  height: 17px;
  font: bold 13px/15px var(--ui);
  color: #fff;
  background: #c8504f;
}
.dialog-body {
  display: flex;
  flex: 1;
  flex-direction: column;
  background: var(--face);
}
.dialog-main {
  display: flex;
  flex: 1;
  padding-right: 15px;
}
.ids {
  display: flex;
  flex-direction: column;
  width: 109px;
  padding: 8px 10px 0 7px;
}
.ids .spin {
  margin-bottom: 3px;
}
.comment {
  height: 18px;
  border: 1px solid #b4b4b4;
  background: #fff;
}
.pages {
  display: flex;
  flex: 1;
  flex-direction: column;
}
.tabs {
  display: flex;
  align-items: flex-end;
  height: 18px;
}
.tabs button {
  height: 15px;
  padding: 0 4px;
  border: 1px solid var(--line);
  border-width: 1px 1px 0 0;
  background: #ececec;
}
.tabs button:nth-child(2),
.tabs button:nth-child(3) {
  min-width: 37px;
  text-align: left;
}
.tabs .active {
  height: 18px;
  width: 39px;
  border-left-width: 1px;
  background: #fff;
}
.page {
  display: flex;
  flex: 1;
  flex-direction: column;
  padding: 5px 12px 0 10px;
  border: 1px solid var(--line);
  border-top-color: #ccc;
  background: #fff;
}
.extended {
  align-self: flex-end;
  margin-right: 9px;
}
.kinds {
  display: flex;
  padding-left: 4px;
  margin-bottom: 13px;
}
.kind {
  display: flex;
  flex-direction: column;
  align-items: center;
  gap: 4px;
  width: 75px;
}
.kind svg {
  width: 48px;
  height: 44px;
  margin-top: -2px;
}
.s-letter {
  font: bold 27px "Liberation Serif", serif;
  fill: #111;
}
.format {
  display: flex;
  height: 186px;
  margin: 0;
  padding: 2px 0 0 21px;
  border: 1px solid #dcdcdc;
}
.format legend {
  margin-left: -17px;
  padding: 0 3px;
}
.fields {
  display: grid;
  grid-template-columns: 118px 112px;
  grid-template-rows: repeat(7, 18px) 6px;
  row-gap: 3px;
  align-items: center;
  align-content: start;
}
.fields .select {
  width: 96px;
}
.fields .select.wide {
  width: 112px;
}
.num {
  display: flex;
  gap: 2px;
}
.num .spin {
  width: 96px;
}
.pad-btn {
  width: 15px;
  height: 16px;
  margin-top: 1px;
  border: 1px solid #aaa;
  background: #e8e8e8;
}
.pad-btn svg {
  display: block;
  width: 12px;
  height: 12px;
}
.banner {
  grid-column: span 2;
}
.options {
  padding-left: 6px;
}
.block-row {
  display: flex;
  align-items: center;
  margin-bottom: 32px;
}
.block-row label {
  width: 118px;
}
.block-row .select {
  width: 148px;
}
.direct {
  margin-left: 51px;
}
.cursor {
  margin: 5px 0 0 72px;
}
.dialog-footer {
  display: flex;
  height: 42px;
  padding: 15px 16px 0 18px;
}
.help {
  margin-right: auto;
}
.goto {
  width: 126px;
  margin-right: 16px;
}
.default {
  margin-right: 7px;
}
.mouse {
  position: absolute;
  left: 371px;
  top: 356px;
  width: 12px;
  height: 18px;
}
```
